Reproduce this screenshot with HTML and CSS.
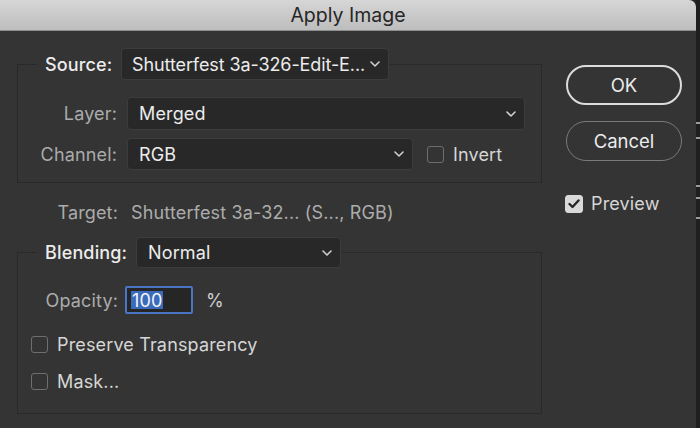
FILE: index.html
```html
<!DOCTYPE html>
<html lang="en">
<head>
    <meta charset="UTF-8">
    <title>Apply Image</title>
    <link rel="stylesheet" href="styles.css">
</head>
<body>
    <div class="window">
        <div class="titlebar">Apply Image</div>

        <div class="dialog">
            <div class="main">
                <!-- Source -->
                <fieldset class="group group-source">
                    <legend>
                        <span class="label label-strong label-source">Source:</span>
                        <div class="select select-source">
                            <span>Shutterfest 3a-326-Edit-E...</span>
                            <svg class="chevron" width="10" height="6" viewBox="0 0 10 6"><polyline points="1,1 5,5 9,1" /></svg>
                        </div>
                    </legend>

                    <div class="row row-layer">
                        <span class="label label-right">Layer:</span>
                        <div class="select select-layer">
                            <span>Merged</span>
                            <svg class="chevron" width="10" height="6" viewBox="0 0 10 6"><polyline points="1,1 5,5 9,1" /></svg>
                        </div>
                    </div>

                    <div class="row row-channel">
                        <span class="label label-right">Channel:</span>
                        <div class="select select-channel">
                            <span>RGB</span>
                            <svg class="chevron" width="10" height="6" viewBox="0 0 10 6"><polyline points="1,1 5,5 9,1" /></svg>
                        </div>
                        <span class="checkbox"></span>
                        <span class="check-text">Invert</span>
                    </div>
                </fieldset>

                <!-- Target -->
                <div class="row row-target">
                    <span class="label label-right target-label">Target:</span>
                    <span class="target-value">Shutterfest 3a-32... (S..., RGB)</span>
                </div>

                <!-- Blending -->
                <fieldset class="group group-blend">
                    <legend>
                        <span class="label label-strong label-blend">Blending:</span>
                        <div class="select select-blend">
                            <span>Normal</span>
                            <svg class="chevron" width="10" height="6" viewBox="0 0 10 6"><polyline points="1,1 5,5 9,1" /></svg>
                        </div>
                    </legend>

                    <div class="row row-opacity">
                        <span class="label label-right opacity-label">Opacity:</span>
                        <div class="num-input"><span class="selected">100</span></div>
                        <span class="percent">%</span>
                    </div>

                    <div class="row row-check row-preserve">
                        <span class="checkbox"></span>
                        <span class="check-text">Preserve Transparency</span>
                    </div>

                    <div class="row row-check row-mask">
                        <span class="checkbox"></span>
                        <span class="check-text">Mask...</span>
                    </div>
                </fieldset>
            </div>

            <div class="side">
                <button class="btn btn-ok">OK</button>
                <button class="btn btn-cancel">Cancel</button>
                <div class="row row-preview">
                    <span class="checkbox checked">
                        <svg width="12" height="10" viewBox="0 0 12 10"><polyline points="1.5,5 4.5,8 10.5,1.5" /></svg>
                    </span>
                    <span class="check-text">Preview</span>
                </div>
            </div>
        </div>
    </div>

    <!-- край окна за диалогом -->
    <div class="edge">
        <span class="mark" style="margin-top: 122px"></span>
        <span class="mark" style="margin-top: 13px"></span>
        <span class="mark" style="margin-top: 46px"></span>
        <span class="mark" style="margin-top: 10px"></span>
        <span class="mark" style="margin-top: 18px"></span>
    </div>
</body>
</html>
```

FILE: styles.css
```css
/* Общие стили */
body {
    margin: 0;
    padding: 0;
    width: 700px;
    height: 428px;
    overflow: hidden;
    display: flex;
    background: #252525;
    font-family: Inter, "Liberation Sans", sans-serif;
    font-size: 18px;
    letter-spacing: 0.15px;
    color: #e4e4e4;
}

.window {
    width: 696px;
    height: 428px;
    display: flex;
    flex-direction: column;
    background: #343434;
    border-top-right-radius: 7px;
    overflow: hidden;
}

/* Заголовок */
.titlebar {
    height: 31px;
    flex-shrink: 0;
    box-sizing: border-box;
    border-bottom: 1px solid #8e8e8e;
    background: linear-gradient(to bottom, #d6d6d6, #bdbdbd);
    color: #262626;
    font-size: 19.5px;
    letter-spacing: 0;
    line-height: 31px;
    text-align: center;
}

.dialog {
    flex-grow: 1;
    display: flex;
}

.main {
    width: 525px;
    padding: 17px 0 0 17px;
}

/* Группы */
.group {
    margin: 0;
    padding: 0;
    border: 1px solid #292929;
    min-width: 0;
}

    .group legend {
        display: flex;
        align-items: center;
        margin-left: 19px;
        padding: 0 1px 0 8px;
    }

.label {
    color: #ababab;
    white-space: nowrap;
}

.label-strong {
    color: #ececec;
    font-weight: 500;
}

.label-source {
    width: 66px;
    margin-right: 10px;
}

.label-blend {
    width: 82px;
    margin-right: 9px;
}

.label-right {
    width: 99px;
    text-align: right;
    margin-right: 10px;
    flex-shrink: 0;
}

/* Выпадающие списки */
.select {
    box-sizing: border-box;
    height: 32px;
    display: flex;
    align-items: center;
    justify-content: space-between;
    padding: 0 8px 0 11px;
    background: #282828;
    border: 1px solid #3c3c3c;
    border-radius: 4px;
    color: #ececec;
    white-space: nowrap;
}

.select-source {
    width: 268px;
    padding-left: 10px;
    letter-spacing: -0.1px;
}

.select-layer {
    width: 398px;
    height: 33px;
}

.select-channel {
    width: 286px;
}

.select-blend {
    width: 205px;
    height: 31px;
}

.chevron {
    flex-shrink: 0;
    fill: none;
    stroke: #cfcfcf;
    stroke-width: 1.6;
    stroke-linecap: round;
    stroke-linejoin: round;
}

/* Строки */
.row {
    display: flex;
    align-items: center;
}

.row-layer {
    margin-top: 17px;
}

.row-channel {
    margin-top: 8px;
    margin-bottom: 12px;
}

    .row-channel .checkbox {
        margin-left: 14px;
        margin-right: 9px;
    }

.row-target {
    height: 24px;
    margin: 17px 0 13px;
}

.target-label {
    width: 101px;
    margin-right: 13px;
}

.target-value {
    color: #acacac;
    white-space: nowrap;
}

/* Непрозрачность */
.row-opacity {
    margin-top: 18px;
}

.opacity-label {
    width: 100px;
    margin-right: 7px;
}

.num-input {
    box-sizing: border-box;
    width: 68px;
    height: 28px;
    padding: 3px 0 3px 4px;
    display: flex;
    border: 2px solid #4875c4;
    border-radius: 2px;
    background: #262626;
}

    .num-input .selected {
        background: #3a6bbd;
        color: #f4f4f4;
        line-height: 20px;
        padding: 0 1px;
    }

.percent {
    margin-left: 13px;
    color: #cfcfcf;
}

/* Чекбоксы */
.checkbox {
    box-sizing: border-box;
    width: 17px;
    height: 17px;
    flex-shrink: 0;
    border: 1.5px solid #6e6e6e;
    border-radius: 3px;
    display: flex;
    align-items: center;
    justify-content: center;
}

    .checkbox.checked {
        width: 18px;
        height: 18px;
        background: #d9d9d9;
        border-color: #d9d9d9;
    }

    .checkbox svg {
        fill: none;
        stroke: #262626;
        stroke-width: 2.4;
        stroke-linecap: round;
        stroke-linejoin: round;
    }

.check-text {
    color: #d6d6d6;
    white-space: nowrap;
}

.row-check {
    height: 24px;
    padding-left: 13px;
}

    .row-check .checkbox {
        margin-right: 9px;
    }

.row-preserve {
    margin-top: 18px;
}

.row-mask {
    margin-top: 13px;
    margin-bottom: 20px;
}

/* Кнопки справа */
.side {
    display: flex;
    flex-direction: column;
    padding: 34px 0 0 24px;
}

.btn {
    box-sizing: border-box;
    width: 116px;
    height: 40px;
    border-radius: 20px;
    background: transparent;
    font-family: inherit;
    font-size: 18.5px;
    color: #ececec;
    cursor: pointer;
}

.btn-ok {
    border: 2px solid #dcdcdc;
}

.btn-cancel {
    margin-top: 16px;
    border: 1.5px solid #7a7a7a;
}

.row-preview {
    margin-top: 32px;
    margin-left: -1px;
}

    .row-preview .checkbox {
        margin-right: 8px;
    }

/* Полоска справа */
.edge {
    width: 4px;
    display: flex;
    flex-direction: column;
    background: #1f1f1f;
}

.mark {
    display: block;
    width: 4px;
    height: 2px;
    background: #9a9a9a;
}
```
